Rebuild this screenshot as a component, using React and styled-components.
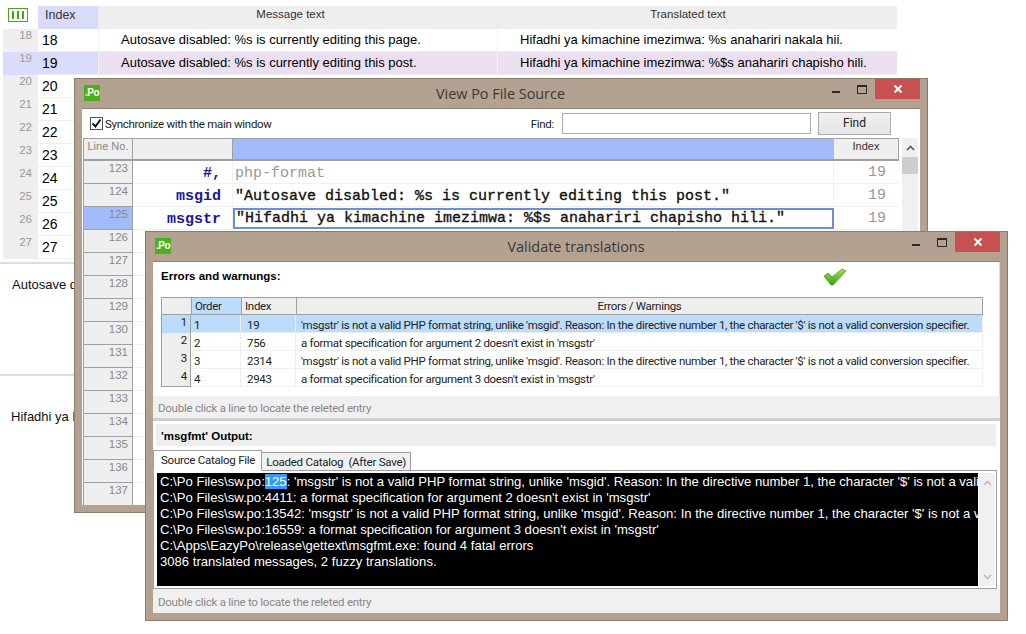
import React from "react";
import styled, { createGlobalStyle } from "styled-components";

const uiFont = `Roboto, "Liberation Sans", sans-serif`;

const Global = createGlobalStyle`
  html, body { margin: 0; padding: 0; background: #fff; }
  body { font-family: "Liberation Sans", Arial, sans-serif; color: #000; }
  * { box-sizing: border-box; }
`;

const Desktop = styled.div`
  position: relative;
  width: 1026px;
  height: 634px;
  overflow: hidden;
  background: #fff;
`;

/* main editor behind the dialogs */
const MainGrid = styled.div`
  display: grid;
  grid-template-columns: 35px 60px 399px 400px;
  grid-auto-rows: 23px;
  margin: 6px 0 0 3px;
  width: 894px;
  font-size: 13.5px;
`;
const Corner = styled.div`
  background: #fff;
  padding: 2px 0 0 5px;
`;
const HeadCell = styled.div`
  background: ${(p) => (p.$on ? "#d9dbfb" : "#eeeeee")};
  color: #333;
  font-size: ${(p) => (p.$left ? "12.5px" : "11.5px")};
  padding-top: 2px;
  text-align: ${(p) => (p.$left ? "left" : "center")};
  padding-left: ${(p) => (p.$left ? "7px" : "0")};
  padding-right: ${(p) => p.$shift || 0}px;
`;
const RowNo = styled.div`
  background: ${(p) => (p.$on ? "#dadcfb" : "#eeeeee")};
  color: #999;
  font-size: 11.5px;
  text-align: right;
  padding: 0 6px 0 0;
  border-bottom: 1px solid ${(p) => (p.$on ? "#dadcfb" : "#eeeeee")};
`;
const IdxCell = styled.div`
  background: ${(p) => (p.$on ? "#dadcfb" : "#fff")};
  border-bottom: 1px solid #eeeeee;
  padding: 3px 0 0 4px;
  font-size: 14px;
`;
const MsgCell = styled.div`
  background: ${(p) => (p.$on ? "#ebdff1" : "#fff")};
  border-bottom: 1px solid #eeeeee;
  border-left: 1px solid #f3f3f3;
  padding: 3px 0 0 22px;
  white-space: nowrap;
  overflow: hidden;
  font-size: 13px;
`;
const Pane = styled.div`
  width: 897px;
  height: 112px;
  border-top: 2px solid #dcdcdc;
  padding: ${(p) => p.$pad};
  font-size: 13px;
  color: #101010;
`;
const PaneStack = styled.div`
  margin-top: 3px;
`;

/* dialogs sit on a free canvas */
const Win = styled.div`
  position: absolute;
  left: ${(p) => p.$x}px;
  top: ${(p) => p.$y}px;
  width: ${(p) => p.$w}px;
  height: ${(p) => p.$h}px;
  background: #b3a291;
  border: 1px solid #8a7d6f;
  display: flex;
  flex-direction: column;
`;
const TitleBar = styled.div`
  height: 29px;
  flex: none;
  display: flex;
  align-items: flex-start;
  position: relative;
`;
const Logo = styled.div`
  margin: 6px 0 0 9px;
  width: 16px;
  height: 16px;
  background: #4caf1e;
  color: #fff;
  font-size: 10px;
  font-weight: bold;
  line-height: 16px;
  text-align: center;
  letter-spacing: -0.5px;
  white-space: nowrap;
  overflow: hidden;
`;
const Title = styled.div`
  position: absolute;
  left: 0;
  right: 1px;
  top: 5px;
  text-align: center;
  font-family: "Open Sans", sans-serif;
  font-size: 14.4px;
  color: #3d3833;
`;
const Controls = styled.div`
  margin-left: auto;
  margin-right: 7px;
  display: flex;
  align-items: flex-start;
  position: relative;
`;
const Ctrl = styled.div`
  width: 26px;
  height: 20px;
  display: flex;
  align-items: center;
  justify-content: center;
`;
const Close = styled(Ctrl)`
  width: 45px;
  background: #c75050;
`;
const Body = styled.div`
  flex: 1;
  margin: 0 7px 7px 7px;
  background: #fff;
  display: flex;
  flex-direction: column;
  min-height: 0;
  border-top: 1px solid #8f8376;
`;

/* source window */
const FindBar = styled.div`
  height: 29px;
  flex: none;
  display: flex;
  align-items: center;
  padding: 0 29px 0 8px;
  font-family: ${uiFont};
  font-size: 11.5px;
  letter-spacing: -0.3px;
  color: #222;
`;
const CheckBox = styled.div`
  width: 13px;
  height: 13px;
  border: 1px solid #555;
  margin-right: 2px;
  display: flex;
  align-items: center;
  justify-content: center;
`;
const FindLabel = styled.span`
  margin-left: auto;
  margin-right: 8px;
`;
const FindInput = styled.div`
  width: 249px;
  height: 21px;
  border: 1px solid #ababab;
  margin-right: 7px;
`;
const FindBtn = styled.div`
  width: 73px;
  height: 23px;
  border: 1px solid #acacac;
  background: linear-gradient(#f0f0f0, #e5e5e5);
  text-align: center;
  line-height: 21px;
  font-size: 12px;
  letter-spacing: 0;
`;
const SrcWrap = styled.div`
  display: flex;
  flex: 1;
  min-height: 0;
  padding-left: 1px;
`;
const SrcGrid = styled.div`
  display: grid;
  grid-template-columns: 50px 100px 601px 65px;
  grid-auto-rows: 23px;
  width: 816px;
  overflow: hidden;
`;
const SrcHead = styled.div`
  background: ${(p) => (p.$blue ? "#a4bbfb" : "#efefef")};
  border-top: 1px solid #a0a0a0;
  border-bottom: 2px solid #a0a0a0;
  border-left: ${(p) => (p.$first ? "1px solid #a0a0a0" : "0")};
  border-right: ${(p) => (p.$blue ? "0" : "1px solid #a0a0a0")};
  color: ${(p) => (p.$first ? "#888" : "#333")};
  font-size: 11px;
  text-align: center;
  padding-top: 1px;
`;
const LineNo = styled.div`
  background: ${(p) => (p.$on ? "#a4bbfb" : "#efefef")};
  border-left: 1px solid #a0a0a0;
  border-right: 1px solid #a0a0a0;
  border-bottom: 1px solid #a0a0a0;
  color: #888;
  font-size: 11.5px;
  text-align: right;
  padding: 1px 4px 0 0;
`;
const Keyword = styled.div`
  border-bottom: 1px solid #f0f0f0;
  border-right: 1px solid #f0f0f0;
  color: #17179c;
  font: bold 15px "Liberation Mono", monospace;
  text-align: right;
  padding: 4px 11px 0 0;
`;
const SrcText = styled.div`
  border-bottom: 1px solid #f0f0f0;
  border-right: 1px solid #f0f0f0;
  color: ${(p) => (p.$dim ? "#999" : "#111")};
  font: 15px "Liberation Mono", monospace;
  -webkit-text-stroke: ${(p) => (p.$dim ? "0" : "0.35px")};
  padding: 4px 0 0 2px;
  white-space: nowrap;
  overflow: hidden;
`;
const SrcEdit = styled(SrcText)`
  border: 2px solid #6c8fd0;
  padding: 0 0 0 1px;
  height: 21px;
  margin-top: 1px;
`;
const SrcIdx = styled.div`
  border-bottom: 1px solid #f0f0f0;
  color: #999;
  font: 15px "Liberation Mono", monospace;
  text-align: right;
  padding: 3px 13px 0 0;
`;
const VScroll = styled.div`
  width: 16px;
  margin-left: ${(p) => p.$gap}px;
  background: #f0f0f0;
  display: flex;
  flex-direction: column;
  align-items: center;
  flex: none;
`;
const Arrow = styled.div`
  height: 19px;
  flex: none;
  display: flex;
  align-items: center;
  justify-content: center;
`;
const Thumb = styled.div`
  width: 100%;
  height: 17px;
  background: #cdcdcd;
`;
const Spacer = styled.div`
  flex: 1;
`;

/* validate window */
const ErrPanel = styled.div`
  height: 134px;
  flex: none;
  padding: 0 16px 0 8px;
  display: flex;
  flex-direction: column;
  border-right: 1px solid #dedede;
  position: relative;
`;
const PanelHead = styled.div`
  height: 35px;
  flex: none;
  padding-top: 8px;
  font-size: 11.5px;
  font-weight: bold;
  display: flex;
`;
const Tick = styled.svg`
  position: absolute;
  left: 670px;
  top: 6px;
`;
const ErrGrid = styled.div`
  display: grid;
  grid-template-columns: 30px 50px 55px 687px;
  grid-auto-rows: 18px;
  width: 822px;
  font-family: ${uiFont};
  font-size: 11.5px;
  letter-spacing: -0.3px;
`;
const ErrHead = styled.div`
  background: ${(p) => (p.$on ? "#bcdcfb" : "#eeeeee")};
  border-top: 1px solid #a0a0a0;
  border-bottom: 1px solid #a0a0a0;
  border-left: 1px solid ${(p) => (p.$line ? "#a0a0a0" : "#fff")};
  border-right: ${(p) => (p.$end ? "1px solid #a0a0a0" : "0")};
  padding: 1px 0 0 ${(p) => (p.$center ? "0" : "3px")};
  text-align: ${(p) => (p.$center ? "center" : "left")};
  color: #222;
`;
const ErrNo = styled.div`
  background: ${(p) => (p.$on ? "#bcdcfb" : "#eeeeee")};
  border-left: 1px solid #a0a0a0;
  border-right: 1px solid #a0a0a0;
  border-bottom: ${(p) => (p.$last ? "1px solid #a0a0a0" : "0")};
  text-align: right;
  padding: 0 3px 0 0;
  color: #222;
`;
const ErrCell = styled.div`
  background: ${(p) => (p.$on ? "#bcdcfb" : "#fff")};
  border-bottom: 1px solid #eeeeee;
  border-right: 1px solid #eeeeee;
  padding: 3px 0 0 ${(p) => p.$pad || 5}px;
  white-space: nowrap;
  overflow: hidden;
  color: #222;
`;
const StatusBar = styled.div`
  height: ${(p) => p.$h}px;
  flex: ${(p) => (p.$fill ? "1" : "none")};
  background: #f0f0f0;
  color: #888;
  font-family: ${uiFont};
  font-size: 11.5px;
  letter-spacing: -0.25px;
  padding: ${(p) => (p.$fill ? "6px" : "5px")} 0 0 5px;
`;
const Divider = styled.div`
  height: 3px;
  flex: none;
  background: #cfcfcf;
`;
const OutHead = styled.div`
  height: 22px;
  flex: none;
  margin: 3px 4px 0 3px;
  background: #eeeeee;
  font-size: 11.5px;
  font-weight: bold;
  padding: 6px 0 0 5px;
`;
const Tabs = styled.div`
  display: flex;
  align-items: flex-end;
  height: 25px;
  flex: none;
  margin-bottom: -1px;
  position: relative;
`;
const Tab = styled.div`
  height: ${(p) => (p.$on ? "21px" : "19px")};
  padding: ${(p) => (p.$on ? "2px 6px 0 7px" : "2px 4px 0 4px")};
  border: 1px solid #a0a0a0;
  border-bottom: ${(p) => (p.$on ? "1px solid #fff" : "1px solid #a0a0a0")};
  border-left: ${(p) => (p.$on ? "1px solid #a0a0a0" : "0")};
  background: ${(p) => (p.$on ? "#fff" : "#f0f0f0")};
  font-family: ${uiFont};
  font-size: 11.5px;
  letter-spacing: -0.25px;
  white-space: pre;
  color: #222;
`;
const OutBox = styled.div`
  height: 119px;
  flex: none;
  margin-right: 3px;
  border: 1px solid #a0a0a0;
  padding: 2px 1px 2px 3px;
  display: flex;
`;
const Terminal = styled.div`
  width: 821px;
  flex: none;
  background: #000;
  color: #fff;
  font-size: 13.1px;
  line-height: 16px;
  padding: 1px 0 0 3px;
  overflow: hidden;
`;
const TermLine = styled.div`
  white-space: nowrap;
`;
const Sel = styled.span`
  background: #3399ff;
`;
const GutterScroll = styled(VScroll)`
  margin-left: 1px;
  justify-content: space-between;
`;

const Grip = () => (
  <svg width="20" height="14" viewBox="0 0 20 14">
    <rect x="0.5" y="0.5" width="19" height="13" fill="#fff" stroke="#4ca51f" />
    <path d="M5 3v8M10 3v8M15 3v8" stroke="#4ca51f" strokeWidth="2" />
  </svg>
);
const XIcon = () => (
  <svg width="10" height="10" viewBox="0 0 10 10">
    <path d="M1.5 1.5l7 7M8.5 1.5l-7 7" stroke="#fff" strokeWidth="2" />
  </svg>
);
const WinControls = () => (
  <Controls>
    <Ctrl>
      <svg width="10" height="10" viewBox="0 0 10 10">
        <rect x="1" y="7" width="8" height="2" fill="#2a2a2a" />
      </svg>
    </Ctrl>
    <Ctrl>
      <svg width="10" height="9" viewBox="0 0 10 9">
        <rect x="0.5" y="0.5" width="9" height="8" fill="none" stroke="#2a2a2a" />
        <rect x="0" y="0" width="10" height="2" fill="#2a2a2a" />
      </svg>
    </Ctrl>
    <Close>
      <XIcon />
    </Close>
  </Controls>
);
const ChevUp = ({ color }) => (
  <svg width="9" height="6" viewBox="0 0 9 6">
    <path d="M1 5l3.5-3.5L8 5" fill="none" stroke={color} strokeWidth="1.6" />
  </svg>
);
const ChevDown = ({ color }) => (
  <svg width="9" height="6" viewBox="0 0 9 6">
    <path d="M1 1l3.5 3.5L8 1" fill="none" stroke={color} strokeWidth="1.6" />
  </svg>
);

const mainRows = [
  [18, "Autosave disabled: %s is currently editing this page.", "Hifadhi ya kimachine imezimwa: %s anahariri nakala hii."],
  [19, "Autosave disabled: %s is currently editing this post.", "Hifadhi ya kimachine imezimwa: %$s anahariri chapisho hili."],
  [20], [21], [22], [23], [24], [25], [26], [27],
];
const badFormat =
  "'msgstr' is not a valid PHP format string, unlike 'msgid'. Reason: In the directive number 1, the character '$' is not a valid conversion specifier.";
const errors = [
  [1, 19, badFormat],
  [2, 756, "a format specification for argument 2 doesn't exist in 'msgstr'"],
  [3, 2314, badFormat],
  [4, 2943, "a format specification for argument 3 doesn't exist in 'msgstr'"],
];
const emptyLines = [126, 127, 128, 129, 130, 131, 132, 133, 134, 135, 136, 137];

export default function App() {
  return (
    <Desktop>
      <Global />

      <MainGrid>
        <Corner><Grip /></Corner>
        <HeadCell $on $left>Index</HeadCell>
        <HeadCell $shift={14}>Message text</HeadCell>
        <HeadCell $shift={18}>Translated text</HeadCell>
        {mainRows.map(([n, msg, tr]) => (
          <React.Fragment key={n}>
            <RowNo $on={n === 19}>{n}</RowNo>
            <IdxCell $on={n === 19}>{n}</IdxCell>
            <MsgCell $on={n === 19}>{msg}</MsgCell>
            <MsgCell $on={n === 19}>{tr}</MsgCell>
          </React.Fragment>
        ))}
      </MainGrid>
      <PaneStack>
        <Pane $pad="13px 0 0 12px">Autosave disabled: %s is currently editing this post.</Pane>
        <Pane $pad="33px 0 0 11px">Hifadhi ya kimachine imezimwa: %$s anahariri chapisho hili.</Pane>
      </PaneStack>

      <Win $x={74} $y={78} $w={854} $h={435}>
        <TitleBar>
          <Logo>.Po</Logo>
          <Title>View Po File Source</Title>
          <WinControls />
        </TitleBar>
        <Body>
          <FindBar>
            <CheckBox>
              <svg width="11" height="11" viewBox="0 0 11 11">
                <path d="M1.5 5.5l3 3 5-7" fill="none" stroke="#111" strokeWidth="2" />
              </svg>
            </CheckBox>
            Synchronize with the main window
            <FindLabel>Find:</FindLabel>
            <FindInput />
            <FindBtn>Find</FindBtn>
          </FindBar>
          <SrcWrap>
            <SrcGrid>
              <SrcHead $first>Line No.</SrcHead>
              <SrcHead />
              <SrcHead $blue />
              <SrcHead>Index</SrcHead>

              <LineNo>123</LineNo>
              <Keyword>#,</Keyword>
              <SrcText $dim>php-format</SrcText>
              <SrcIdx>19</SrcIdx>

              <LineNo>124</LineNo>
              <Keyword>msgid</Keyword>
              <SrcText>"Autosave disabled: %s is currently editing this post."</SrcText>
              <SrcIdx>19</SrcIdx>

              <LineNo $on>125</LineNo>
              <Keyword>msgstr</Keyword>
              <SrcEdit>"Hifadhi ya kimachine imezimwa: %$s anahariri chapisho hili."</SrcEdit>
              <SrcIdx>19</SrcIdx>

              {emptyLines.map((n) => (
                <React.Fragment key={n}>
                  <LineNo>{n}</LineNo>
                  <Keyword />
                  <SrcText />
                  <SrcIdx />
                </React.Fragment>
              ))}
            </SrcGrid>
            <VScroll $gap={3}>
              <Arrow><ChevUp color="#555" /></Arrow>
              <Thumb />
              <Spacer />
            </VScroll>
          </SrcWrap>
        </Body>
      </Win>

      <Win $x={145} $y={231} $w={863} $h={390}>
        <TitleBar>
          <Logo>.Po</Logo>
          <Title>Validate translations</Title>
          <WinControls />
        </TitleBar>
        <Body>
          <ErrPanel>
            <PanelHead>Errors and warnungs:</PanelHead>
            <Tick width="24" height="18" viewBox="0 0 24 18">
              <defs>
                <linearGradient id="tick" x1="0" y1="0" x2="0" y2="1">
                  <stop offset="0" stopColor="#9fe05a" />
                  <stop offset="1" stopColor="#3aa012" />
                </linearGradient>
              </defs>
              <path d="M1 8l4-3 4 4L19 1l4 2L10 17h-2z" fill="url(#tick)" stroke="#4c9a20" strokeWidth="0.8" />
            </Tick>
            <ErrGrid>
              <ErrHead $line />
              <ErrHead $on $line>Order</ErrHead>
              <ErrHead $line>Index</ErrHead>
              <ErrHead $line $end $center>Errors / Warnings</ErrHead>
              {errors.map(([n, idx, text]) => (
                <React.Fragment key={n}>
                  <ErrNo $on={n === 1} $last={n === 4}>{n}</ErrNo>
                  <ErrCell $on={n === 1} $pad={3}>{n}</ErrCell>
                  <ErrCell $on={n === 1} $pad={6}>{idx}</ErrCell>
                  <ErrCell $on={n === 1}>{text}</ErrCell>
                </React.Fragment>
              ))}
            </ErrGrid>
          </ErrPanel>
          <StatusBar $h={22}>Double click a line to locate the releted entry</StatusBar>
          <Divider />
          <OutHead>'msgfmt' Output:</OutHead>
          <Tabs>
            <Tab $on>Source Catalog File</Tab>
            <Tab>Loaded Catalog  (After Save)</Tab>
          </Tabs>
          <OutBox>
            <Terminal>
              <TermLine>C:\Po Files\sw.po:<Sel>125</Sel>: {badFormat}</TermLine>
              <TermLine>C:\Po Files\sw.po:4411: a format specification for argument 2 doesn't exist in 'msgstr'</TermLine>
              <TermLine>C:\Po Files\sw.po:13542: {badFormat}</TermLine>
              <TermLine>C:\Po Files\sw.po:16559: a format specification for argument 3 doesn't exist in 'msgstr'</TermLine>
              <TermLine>C:\Apps\EazyPo\release\gettext\msgfmt.exe: found 4 fatal errors</TermLine>
              <TermLine>3086 translated messages, 2 fuzzy translations.</TermLine>
            </Terminal>
            <GutterScroll>
              <Arrow><ChevUp color="#bbb" /></Arrow>
              <Arrow><ChevDown color="#bbb" /></Arrow>
            </GutterScroll>
          </OutBox>
          <StatusBar $fill>Double click a line to locate the releted entry</StatusBar>
        </Body>
      </Win>
    </Desktop>
  );
}
